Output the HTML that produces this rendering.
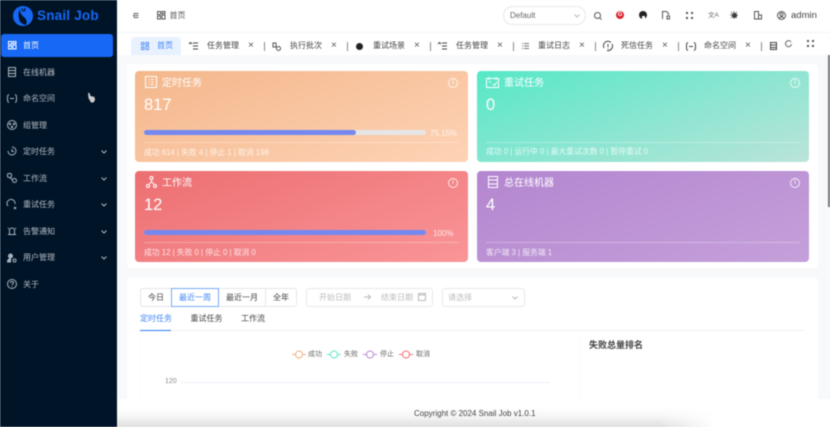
<!DOCTYPE html>
<html><head><meta charset="utf-8">
<style>
*{box-sizing:border-box;margin:0;padding:0}
html,body{width:830px;height:427px;overflow:hidden;background:#f8f9fb;font-family:"Liberation Sans","Noto Sans CJK SC",sans-serif;color:#333}
#r{position:relative;width:830px;height:427px;overflow:hidden;filter:blur(.4px)}
.a{position:absolute;white-space:nowrap}
svg{position:absolute;overflow:visible;fill:none;stroke:currentColor;stroke-width:1}
.side{position:absolute;left:0;top:0;width:117px;height:427px;background:#001428}
.mi{position:absolute;left:23px;font-size:8px;line-height:12px;color:#b3bac2}
.ic{color:#aab2ba}
.tab{position:absolute;top:40px;font-size:8px;line-height:12px;color:#444}
.x{position:absolute;top:40px;font-size:10px;line-height:12px;color:#555}
.sep{position:absolute;top:41.500px;width:1px;height:9px;background:#888}
.card{position:absolute;width:333px;height:91px;border-radius:4px;color:#fff}
.card .t{position:absolute;left:27px;top:6px;font-size:10px;line-height:14px}
.card .n{position:absolute;left:9px;top:23px;font-size:16.500px;line-height:22px}
.card .l{position:absolute;left:9px;right:9px;top:71px;height:1px;background:rgba(255,255,255,.3)}
.card .s{position:absolute;left:9px;top:76px;font-size:7.800px;line-height:11px;color:rgba(255,255,255,.8);white-space:nowrap}
.card .i{position:absolute;right:10px;top:7.500px;width:10px;height:10px;border:1px solid rgba(255,255,255,.8);border-radius:50%;font-size:7px;line-height:8px;text-align:center}
.bar{position:absolute;left:9px;top:59.500px;width:282px;height:5px;border-radius:3px;background:#e6e6e6}
.bar i{display:block;height:5px;border-radius:3px;background:#7588f0}
.pct{position:absolute;top:57px;font-size:8px;line-height:11px;color:rgba(255,255,255,.8)}
.btn{position:absolute;top:288px;height:19px;border:1px solid #e5e6e8;font-size:8px;line-height:17px;text-align:center;color:#444;background:#fff}
.lg{position:absolute;top:349px;font-size:7px;line-height:12px;color:#666}
</style></head><body><div id="r">

<div class="a" style="left:117px;top:0;width:713px;height:32px;background:#fff"></div>
<div class="a" style="left:117px;top:32px;width:713px;height:23px;background:#fff;border-top:1px solid #f3f4f6"></div>

<div class="side">
<svg style="left:12px;top:5px;stroke:none" width="22" height="22" viewBox="0 0 22 22"><circle cx="11" cy="11" r="10" fill="#1668f5"/><path d="M8 3c-.5 4 1 7 5 10 2 2 2 5 1 7-4-1-7-3-7-7-1-3 0-7 1-10z" fill="#001428"/><path d="M10 3.500l1 3M13 3l-.5 3.500" stroke="#001428" stroke-width="1.200"/></svg>
<div class="a" style="left:37px;top:7px;font-size:13.500px;line-height:18px;font-weight:700;color:#1668f5;letter-spacing:.2px">Snail Job</div>
<div class="a" style="left:1px;top:34px;width:112px;height:23px;background:#1668f5;border-radius:3px"></div>
<svg style="left:8px;top:41px;color:#fff" width="8" height="9" viewBox="0 0 8 9"><rect x=".5" y=".5" width="3" height="3"/><rect x="5" y=".5" width="3" height="2"/><rect x=".5" y="5" width="3" height="3"/><rect x="5" y="4" width="3" height="4"/></svg>
<div class="mi" style="top:40px;color:#fff">首页</div>

<svg class="ic" style="left:8px;top:67px" width="8" height="10" viewBox="0 0 8 10"><rect x=".5" y=".5" width="7" height="9"/><path d="M.5 3.500h7M.5 6.500h7"/></svg>
<div class="mi" style="top:66.500px">在线机器</div>

<svg class="ic" style="left:7px;top:94px" width="10" height="9" viewBox="0 0 10 9"><path d="M2 .5C.5 1 .5 2 .5 4.500S.5 8 2 8.500M8 .5c1.500.5 1.500 1.500 1.500 4S9.500 8 8 8.500M3 4.500h4"/></svg>
<div class="mi" style="top:93px">命名空间</div>

<svg class="ic" style="left:7px;top:120px" width="10" height="10" viewBox="0 0 10 10"><circle cx="5" cy="5" r="4.500"/><circle cx="3" cy="4" r=".7"/><circle cx="7" cy="4" r=".7"/><circle cx="5" cy="7" r=".7"/></svg>
<div class="mi" style="top:119.500px">组管理</div>

<svg class="ic" style="left:7px;top:146px" width="10" height="10" viewBox="0 0 10 10"><path d="M5 1a4 4 0 1 1-4 4M5 3v2.500h2"/></svg>
<div class="mi" style="top:146px">定时任务</div>
<svg class="ic" style="left:7px;top:173px" width="10" height="10" viewBox="0 0 10 10"><rect x=".5" y=".5" width="4" height="4" rx="1.500"/><circle cx="7.500" cy="7.500" r="2"/><path d="M3 4.500l2.500 2.500"/></svg>
<div class="mi" style="top:172.500px">工作流</div>
<svg class="ic" style="left:7px;top:200px" width="10" height="10" viewBox="0 0 10 10"><path d="M1 6a4 4 0 1 1 7-2M7 7l2 2M9 7l-2 2"/></svg>
<div class="mi" style="top:199px">重试任务</div>
<svg class="ic" style="left:7px;top:226px" width="10" height="10" viewBox="0 0 10 10"><path d="M2.500 8V4.500a2.500 2.500 0 0 1 5 0V8M1 8.500h8M1 2l1 1M9 2L8 3"/></svg>
<div class="mi" style="top:225.500px">告警通知</div>
<svg class="ic" style="left:7px;top:253px" width="10" height="10" viewBox="0 0 10 10"><circle cx="3.500" cy="3" r="2" fill="#aab2ba"/><path d="M.5 9c0-2.500 1.500-3.500 3-3.500V9z" fill="#aab2ba"/><circle cx="7.500" cy="7.500" r="1.500"/></svg>
<div class="mi" style="top:252px">用户管理</div>
<svg class="ic" style="left:7px;top:279px" width="10" height="10" viewBox="0 0 10 10"><circle cx="5" cy="5" r="4.500"/><path d="M3.500 4c0-2 3-2 3 0 0 1-1.500 1-1.500 2.200M5 7.300v.7"/></svg>
<div class="mi" style="top:278.500px">关于</div>

<svg class="ic" style="left:100.500px;top:150px" width="6" height="4"><path d="M.5.500l2.500 2.500 2.500-2.500"/></svg>
<svg class="ic" style="left:100.500px;top:177px" width="6" height="4"><path d="M.5.500l2.500 2.500 2.500-2.500"/></svg>
<svg class="ic" style="left:100.500px;top:203px" width="6" height="4"><path d="M.5.500l2.500 2.500 2.500-2.500"/></svg>
<svg class="ic" style="left:100.500px;top:230px" width="6" height="4"><path d="M.5.500l2.500 2.500 2.500-2.500"/></svg>
<svg class="ic" style="left:100.500px;top:256px" width="6" height="4"><path d="M.5.500l2.500 2.500 2.500-2.500"/></svg>

<svg style="left:87px;top:92px;stroke:none" width="9" height="11" viewBox="0 0 9 11"><path d="M1 1h1.500l1 3 4 1 .5 3-1.500 2.500H4L1.500 6z" fill="#ccc"/></svg>
</div>

<!-- header -->
<svg style="left:133px;top:13px;color:#666" width="6" height="5" viewBox="0 0 6 5"><path d="M.5.500h5M2 2.500h3.500M.5 4.500h5M1.500 1.500l-1 1 1 1"/></svg>
<svg style="left:157px;top:11px;color:#555" width="8" height="9" viewBox="0 0 8 9"><rect x=".5" y=".5" width="3" height="3"/><rect x="5" y=".5" width="3" height="2"/><rect x=".5" y="5" width="3" height="3"/><rect x="5" y="4" width="3" height="4"/></svg>
<div class="a" style="left:169.500px;top:9.500px;font-size:8px;line-height:12px;color:#555">首页</div>

<div class="a" style="left:503px;top:6px;width:83px;height:19px;border:1px solid #e8e8e8;border-radius:10px;background:#fff"></div>
<div class="a" style="left:510px;top:9.500px;font-size:8px;line-height:12px;color:#666">Default</div>
<svg style="left:574px;top:14px;color:#bbb" width="6" height="4"><path d="M.5.500l2.500 2.500 2.500-2.500"/></svg>
<svg style="left:594px;top:12px;color:#555" width="8" height="8" viewBox="0 0 8 8"><circle cx="3.500" cy="3.500" r="3"/><path d="M6 6l1.500 1.500"/></svg>
<div class="a" style="left:616px;top:11px;width:8px;height:8px;border-radius:50%;background:#d9232e;color:#fff;font-size:6px;line-height:8px;text-align:center;font-weight:700">G</div>
<div class="a" style="left:639px;top:11px;width:8px;height:8px;border-radius:50%;background:#222"></div>
<div class="a" style="left:641.500px;top:15.500px;width:3px;height:3.500px;background:#fff"></div>
<svg style="left:662px;top:11px;color:#555" width="8" height="9" viewBox="0 0 8 9"><path d="M.5 8V.5h4l2 2V4M5 5h2.500v3H5z"/></svg>
<svg style="left:686px;top:12px;color:#555;stroke-width:2" width="7" height="7" viewBox="0 0 7 7"><path d="M0 1h2M5 1h2M0 6h2M5 6h2"/></svg>
<div class="a" style="left:708px;top:10px;font-size:6.500px;line-height:11px;color:#666">文A</div>
<div class="a" style="left:731.500px;top:12.500px;width:5px;height:5px;background:#333;border-radius:50%"></div>
<svg style="left:730px;top:11px;color:#444;stroke-width:.7" width="8" height="8" viewBox="0 0 8 8"><path d="M4 0v8M0 4h8M1 1l6 6M7 1L1 7"/></svg>
<svg style="left:754px;top:11px;color:#555" width="8" height="9" viewBox="0 0 8 9"><path d="M.5 8V.5h4v7.500zM4.500 4h3v4h-3z"/></svg>
<svg style="left:777px;top:11px;color:#555" width="9" height="9" viewBox="0 0 9 9"><circle cx="4.500" cy="4.500" r="4"/><circle cx="4.500" cy="3.500" r="1.500"/><path d="M2 7.500c1-2 4-2 5 0"/></svg>
<div class="a" style="left:791px;top:9px;font-size:9.500px;line-height:13px;color:#444">admin</div>

<!-- tabs -->
<div class="a" style="left:131px;top:37px;width:50px;height:18px;background:#e8f1fe;border-radius:4px 4px 0 0"></div>
<svg style="left:140.500px;top:42px;color:#5b93f5" width="8" height="8" viewBox="0 0 8 8"><rect x=".5" y=".5" width="2.500" height="2.500"/><rect x="5" y=".5" width="2.500" height="2"/><rect x=".5" y="5" width="2.500" height="2.500"/><rect x="5" y="4" width="2.500" height="3.500"/></svg>
<div class="tab" style="left:157px;color:#3f86f6">首页</div>

<svg style="left:189px;top:42px;color:#444" width="9" height="8" viewBox="0 0 9 8"><path d="M0 2l1.500-1.500L3 2M4 1h5M4 4h5M4 7h5"/></svg>
<div class="tab" style="left:207px">任务管理</div><div class="x" style="left:248px">×</div><div class="sep" style="left:264px"></div>
<svg style="left:272px;top:42px;color:#555" width="9" height="9" viewBox="0 0 9 9"><rect x="1" y="1" width="3" height="4"/><circle cx="6.500" cy="6.500" r="2"/></svg>
<div class="tab" style="left:290px">执行批次</div><div class="x" style="left:331px">×</div><div class="sep" style="left:347px"></div>
<div class="a" style="left:356px;top:42.500px;width:7px;height:7px;border-radius:50%;background:#222"></div>
<div class="tab" style="left:373px">重试场景</div><div class="x" style="left:414px">×</div><div class="sep" style="left:430px"></div>
<svg style="left:438px;top:42px;color:#444" width="9" height="8" viewBox="0 0 9 8"><path d="M0 2l1.500-1.500L3 2M4 1h5M4 4h5M4 7h5"/></svg>
<div class="tab" style="left:456px">任务管理</div><div class="x" style="left:497px">×</div><div class="sep" style="left:513px"></div>
<svg style="left:522px;top:43px;color:#777" width="7" height="6" viewBox="0 0 7 6"><path d="M0 .5h1M2 .5h5M0 3h1M2 3h5M0 5.500h1M2 5.500h5"/></svg>
<div class="tab" style="left:538px">重试日志</div><div class="x" style="left:579px">×</div><div class="sep" style="left:595px"></div>
<svg style="left:603px;top:41px;color:#444" width="10" height="10" viewBox="0 0 10 10"><path d="M1 7a4.500 4.500 0 0 1 7-5.500M9 3a4.500 4.500 0 0 1-5 6.500M5 3v3M5 7v.7"/></svg>
<div class="tab" style="left:621px">死信任务</div><div class="x" style="left:662px">×</div><div class="sep" style="left:678px"></div>
<svg style="left:686px;top:42px;color:#444" width="10" height="9" viewBox="0 0 10 9"><path d="M2 .5C.5 1 .5 2 .5 4.500S.5 8 2 8.500M8 .5c1.500.5 1.500 1.500 1.500 4S9.500 8 8 8.500M3 4.500h4"/></svg>
<div class="tab" style="left:704px">命名空间</div><div class="x" style="left:745px">×</div><div class="sep" style="left:761px"></div>
<svg style="left:770px;top:42px;color:#444" width="7" height="8" viewBox="0 0 7 8"><rect x=".5" y=".5" width="6" height="7"/><path d="M.5 3h6M.5 5.500h6"/></svg>
<svg style="left:784.500px;top:40px;color:#666" width="7" height="7" viewBox="0 0 7 7"><path d="M6 2a3 3 0 1 0 .5 2"/></svg>
<svg style="left:807px;top:40px;color:#555;stroke-width:2" width="7" height="7" viewBox="0 0 7 7"><path d="M0 1h2M5 1h2M0 6h2M5 6h2"/></svg>

<!-- panel 1 -->
<div class="a" style="left:127px;top:64px;width:691px;height:204px;background:#fff;border-radius:4px"></div>

<div class="card" style="left:135px;top:70.500px;background:linear-gradient(160deg,#f4b78b,#fed3b6)">
<svg style="left:10px;top:5px;color:#fff" width="12" height="12" viewBox="0 0 12 12"><rect x=".5" y=".5" width="11" height="11"/><path d="M3.500 3.500h1M3.500 6h1M3.500 8.500h1M6 3.500h2.500M6 6h2.500M6 8.500h2.500"/></svg>
<div class="t">定时任务</div><div class="n">817</div>
<div class="bar"><i style="width:75.150%"></i></div><div class="pct" style="left:295px">75.15%</div>
<div class="l"></div><div class="s">成功 614 | 失败 4 | 停止 1 | 取消 198</div><div class="i">i</div>
</div>

<div class="card" style="left:135px;top:170.500px;background:linear-gradient(160deg,#ec6f72,#fa9598)">
<svg style="left:11px;top:5px;color:#fff" width="11" height="12" viewBox="0 0 11 12"><circle cx="5.500" cy="2" r="1.500"/><circle cx="2" cy="10" r="1.500"/><circle cx="9" cy="10" r="1.500"/><path d="M5.500 3.500V6M3 8l2.500-2L8 8"/></svg>
<div class="t">工作流</div><div class="n">12</div>
<div class="bar"><i style="width:100%"></i></div><div class="pct" style="left:298px">100%</div>
<div class="l"></div><div class="s">成功 12 | 失败 0 | 停止 0 | 取消 0</div><div class="i">i</div>
</div>

<div class="card" style="left:477px;top:70.500px;width:332px;background:linear-gradient(160deg,#56e8c7,#bbe4da)">
<svg style="left:9px;top:6px;color:#fff" width="13" height="11" viewBox="0 0 13 11"><rect x=".5" y="1.500" width="12" height="9"/><path d="M3 0v3M10 0v3M3 5h2M7 7l1.500 1.500L11 5"/></svg>
<div class="t">重试任务</div><div class="n">0</div>
<div class="l"></div><div class="s" style="top:75px">成功 0 | 运行中 0 | 最大重试次数 0 | 暂停重试 0</div><div class="i" style="right:9px">i</div>
</div>

<div class="card" style="left:477px;top:170.500px;width:332px;background:linear-gradient(160deg,#b486d0,#c5a0da)">
<svg style="left:11px;top:5px;color:#fff" width="10" height="12" viewBox="0 0 10 12"><rect x=".5" y=".5" width="9" height="11"/><path d="M.5 4h9M.5 8h9"/></svg>
<div class="t">总在线机器</div><div class="n">4</div>
<div class="l"></div><div class="s">客户端 3 | 服务端 1</div><div class="i" style="right:9px">i</div>
</div>

<!-- panel 2 -->
<div class="a" style="left:127px;top:277px;width:691px;height:150px;background:#fff;border-radius:4px"></div>
<div class="btn" style="left:140px;width:32px;border-radius:3px 0 0 3px">今日</div>
<div class="btn" style="left:171px;width:48px;border-color:#76a7f8;color:#3f86f6;z-index:2">最近一周</div>
<div class="btn" style="left:218px;width:48px">最近一月</div>
<div class="btn" style="left:265px;width:32px;border-radius:0 3px 3px 0">全年</div>

<div class="a" style="left:306px;top:288px;width:127px;height:19px;border:1px solid #e8e8ea;border-radius:3px"></div>
<div class="a" style="left:319px;top:292px;font-size:8px;line-height:12px;color:#bdbdbd">开始日期</div>
<svg style="left:364px;top:294px;color:#bbb" width="7" height="6" viewBox="0 0 7 6"><path d="M0 3h6.500M4 .5L6.500 3 4 5.500"/></svg>
<div class="a" style="left:381px;top:292px;font-size:8px;line-height:12px;color:#bdbdbd">结束日期</div>
<svg style="left:418px;top:293px;color:#bbb" width="8" height="8" viewBox="0 0 8 8"><rect x=".5" y=".5" width="7" height="7"/><path d="M.5 2h7"/></svg>
<div class="a" style="left:442px;top:288px;width:83px;height:19px;border:1px solid #e8e8ea;border-radius:3px"></div>
<div class="a" style="left:448px;top:292px;font-size:8px;line-height:12px;color:#bdbdbd">请选择</div>
<svg style="left:512px;top:296px;color:#bbb" width="6" height="4"><path d="M.5.500l2.500 2.500 2.500-2.500"/></svg>

<div class="a" style="left:140px;top:313px;font-size:8px;line-height:12px;color:#3f86f6">定时任务</div>
<div class="a" style="left:190.500px;top:313px;font-size:8px;line-height:12px;color:#444">重试任务</div>
<div class="a" style="left:241px;top:313px;font-size:8px;line-height:12px;color:#444">工作流</div>
<div class="a" style="left:140px;top:330px;width:665px;height:1px;background:#f0f1f3"></div>
<div class="a" style="left:140px;top:329.500px;width:31px;height:1.500px;background:#2f7bf6"></div>

<svg style="left:292px;top:350px;color:#f4b083" width="14" height="9" viewBox="0 0 14 9"><path d="M0 4.500h14"/><circle cx="7" cy="4.500" r="3.500" fill="#fff"/></svg>
<div class="lg" style="left:308px">成功</div>
<svg style="left:327px;top:350px;color:#5fe8c8" width="14" height="9" viewBox="0 0 14 9"><path d="M0 4.500h14"/><circle cx="7" cy="4.500" r="3.500" fill="#fff"/></svg>
<div class="lg" style="left:344px">失败</div>
<svg style="left:363px;top:350px;color:#b98bd8" width="14" height="9" viewBox="0 0 14 9"><path d="M0 4.500h14"/><circle cx="7" cy="4.500" r="3.500" fill="#fff"/></svg>
<div class="lg" style="left:380px">停止</div>
<svg style="left:399px;top:350px;color:#ee7377" width="14" height="9" viewBox="0 0 14 9"><path d="M0 4.500h14"/><circle cx="7" cy="4.500" r="3.500" fill="#fff"/></svg>
<div class="lg" style="left:416px">取消</div>

<div class="a" style="left:165px;top:376px;font-size:7px;line-height:11px;color:#888">120</div>
<div class="a" style="left:181px;top:381.500px;width:369px;height:1px;background:#eef0f8"></div>
<div class="a" style="left:580px;top:338px;width:1px;height:62px;background:#f9f9fb"></div>
<div class="a" style="left:140px;top:338px;width:1px;height:62px;background:#fbfbfc"></div>
<div class="a" style="left:589px;top:338px;font-size:9px;line-height:14px;font-weight:700;color:#444">失败总量排名</div>
<div class="a" style="left:241px;top:398.500px;width:2px;height:1px;background:#f3a5a5"></div>

<!-- footer -->
<div class="a" style="left:117px;top:399px;width:713px;height:28px;background:#fff"></div>
<div class="a" style="left:117px;top:399px;width:713px;height:28px;background:linear-gradient(#fff,#fff 30%,#f6f6f6 62%,#dfdfdf 100%);-webkit-mask-image:linear-gradient(90deg,#000 76%,transparent 84%);mask-image:linear-gradient(90deg,#000 76%,transparent 84%)"></div>
<div class="a" style="left:414px;top:406.500px;font-size:8px;line-height:13px;color:#444">Copyright © 2024 Snail Job v1.0.1</div>
<div class="a" style="left:827.500px;top:55px;width:2px;height:152px;background:#777"></div>
</div></body></html>
